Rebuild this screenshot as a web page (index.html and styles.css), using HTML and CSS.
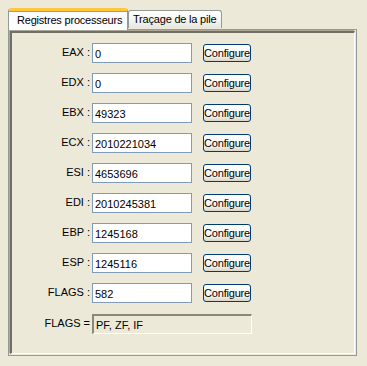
FILE: index.html
```html
<!DOCTYPE html>
<html lang="fr">
<head>
    <meta charset="UTF-8">
    <meta name="viewport" content="width=device-width, initial-scale=1.0">
    <title>Registres</title>
    <link rel="stylesheet" href="styles.css">
</head>
<body>
    <div class="window">
        <div class="tabs">
            <div class="tab active">Registres processeurs</div>
            <div class="tab">Traçage de la pile</div>
        </div>
        <div class="panel">
            <div class="frame">
                <div class="regs">
                    <label>EAX :</label><input type="text" value="0"><button type="button">Configure</button>
                    <label>EDX :</label><input type="text" value="0"><button type="button">Configure</button>
                    <label>EBX :</label><input type="text" value="49323"><button type="button">Configure</button>
                    <label>ECX :</label><input type="text" value="2010221034"><button type="button">Configure</button>
                    <label>ESI :</label><input type="text" value="4653696"><button type="button">Configure</button>
                    <label>EDI :</label><input type="text" value="2010245381"><button type="button">Configure</button>
                    <label>EBP :</label><input type="text" value="1245168"><button type="button">Configure</button>
                    <label>ESP :</label><input type="text" value="1245116"><button type="button">Configure</button>
                    <label>FLAGS :</label><input type="text" value="582"><button type="button">Configure</button>
                    <label class="flags-label">FLAGS =</label>
                    <div class="flags-box">PF, ZF, IF</div>
                </div>
            </div>
        </div>
    </div>
</body>
</html>
```

FILE: styles.css
```css
body {
    margin: 0;
    padding: 0;
    background: #ece9d8;
    font-family: "Liberation Sans", Arial, sans-serif;
    font-size: 11px;
    color: #000000;
}

.window {
    padding: 8px 10px 10px 8px;
}

.tabs {
    display: flex;
    align-items: flex-end;
    height: 21px;
    position: relative;
    z-index: 1;
}

.tab {
    box-sizing: border-box;
    height: 18px;
    padding: 0 4px;
    line-height: 16px;
    border: 1px solid #919b9c;
    border-bottom: none;
    border-radius: 3px 3px 0 0;
    background: linear-gradient(#ffffff, #f3f3ef 60%, #e6e5de);
    margin-bottom: 1px;
    white-space: nowrap;
    letter-spacing: -0.2px;
}

.tab.active {
    width: 120px;
    height: 22px;
    margin-bottom: -1px;
    padding: 0 0 0 8px;
    line-height: 18px;
    border-top: 3px solid #ffc83c;
    box-shadow: inset 0 1px 0 #e68b2c;
    background: #fcfcfe;
}

.tab:last-child {
    width: 94px;
}

.panel {
    height: 327px;
    box-sizing: border-box;
    border: 1px solid #919b9c;
    padding: 1px;
}

.frame {
    height: 100%;
    box-sizing: border-box;
    border-top: 2px solid #716f64;
    border-left: 2px solid #716f64;
    border-right: 1px solid #ffffff;
    border-bottom: 1px solid #ffffff;
    box-shadow: -1px -1px 0 #aca899;
    padding-top: 10px;
}

.regs {
    display: grid;
    grid-template-columns: 77px 100px 48px;
    column-gap: 3px;
    row-gap: 10px;
    align-items: center;
}

.regs label {
    text-align: right;
    padding-bottom: 3px;
    margin-right: -1px;
}

.regs input {
    box-sizing: border-box;
    height: 20px;
    width: 100px;
    margin: 0;
    padding: 1px 2px 0;
    border: 1px solid #7f9db9;
    font-family: inherit;
    font-size: 11px;
    background: #ffffff;
}

.regs button {
    box-sizing: border-box;
    margin-left: 8px;
    width: 48px;
    height: 18px;
    padding: 0;
    border: 1px solid #003c74;
    border-radius: 3px;
    background: linear-gradient(#ffffff, #f2f2ee 70%, #d9d4c8);
    font-family: inherit;
    font-size: 11px;
    letter-spacing: -0.2px;
    color: #000000;
    overflow: hidden;
    white-space: nowrap;
}

.flags-label {
    margin-top: 1px;
}

.flags-box {
    grid-column: 2 / 4;
    margin-top: 1px;
    box-sizing: border-box;
    width: 160px;
    height: 20px;
    padding: 2px 2px 0;
    border-top: 2px solid #8a887c;
    border-left: 2px solid #8a887c;
    border-right: 1px solid #ffffff;
    border-bottom: 1px solid #ffffff;
    background: #ece9d8;
    line-height: 14px;
}
```
